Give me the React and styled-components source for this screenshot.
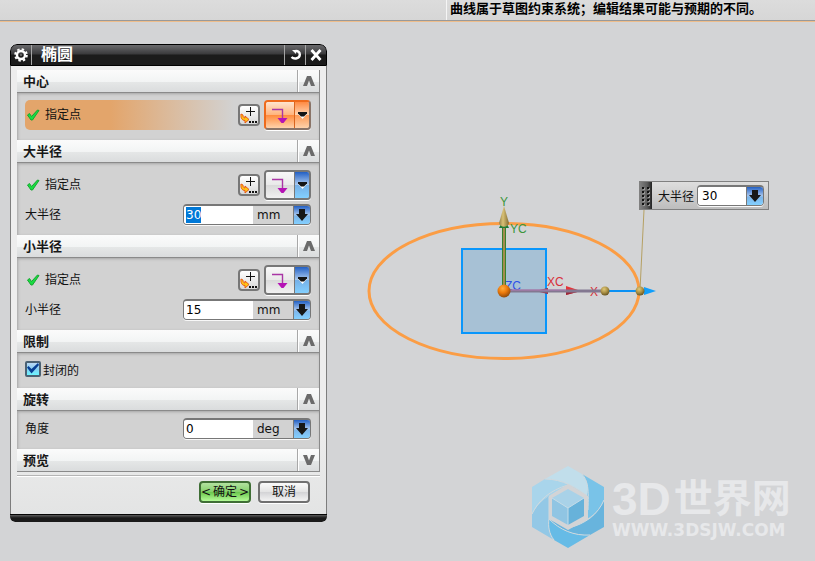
import { useEffect, useRef, useState } from "react";
import styled, { createGlobalStyle, css } from "styled-components";

const App = () => {
  const [major, setMajor] = useState("30");
  const [minor, setMinor] = useState("15");
  const [angle, setAngle] = useState("0");
  const [closed, setClosed] = useState(true);
  const majorRef = useRef();

  useEffect(() => {
    majorRef.current.focus();
    majorRef.current.select();
  }, []);

  return (
    <Page>
      <GlobalStyle />
      <StatusBar>
        <StatusText>曲线属于草图约束系统；编辑结果可能与预期的不同。</StatusText>
      </StatusBar>
      <Viewport>
        <Dialog>
          <TitleBar>
            <TitleButton type="button" aria-label="选项"><GearIcon /></TitleButton>
            <Title>椭圆</Title>
            <TitleButton type="button" aria-label="重置" $right><ResetIcon /></TitleButton>
            <TitleButton type="button" aria-label="关闭" $right><CloseIcon /></TitleButton>
          </TitleBar>
          <Body>
            <Section title="中心">
              <PointRow active />
            </Section>
            <Section title="大半径">
              <PointRow />
              <ValueRow id="major" label="大半径" unit="mm" value={major} onChange={setMajor} inputRef={majorRef} />
            </Section>
            <Section title="小半径">
              <PointRow />
              <ValueRow id="minor" label="小半径" unit="mm" value={minor} onChange={setMinor} />
            </Section>
            <Section title="限制">
              <CheckLabel>
                <CheckBox>
                  <input type="checkbox" checked={closed} onChange={(e) => setClosed(e.target.checked)} />
                  {closed && <TickIcon />}
                </CheckBox>
                封闭的
              </CheckLabel>
            </Section>
            <Section title="旋转">
              <ValueRow id="angle" label="角度" unit="deg" value={angle} onChange={setAngle} />
            </Section>
            <Section title="预览" collapsed />
            <Actions>
              <ActionButton type="button" $primary>
                <span>&lt;</span>
                <span>确定</span>
                <span>&gt;</span>
              </ActionButton>
              <ActionButton type="button">取消</ActionButton>
            </Actions>
          </Body>
          <BottomEdge />
        </Dialog>
        <Sketch />
        <FloatingInput>
          <Grip><GripIcon /></Grip>
          <label htmlFor="floating">大半径</label>
          <Field $floating>
            <input id="floating" value={major} onChange={(e) => setMajor(e.target.value)} />
            <FieldArrow type="button" aria-label="大半径选项"><DownArrow /></FieldArrow>
          </Field>
        </FloatingInput>
        <Watermark>
          <LogoIcon />
          <div>
            <Brand><b>3D</b>世界网</Brand>
            <Site>WWW.3DSJW.COM</Site>
          </div>
        </Watermark>
      </Viewport>
    </Page>
  );
};

const Section = ({ title, collapsed, children }) => (
  <section>
    <SectionHeader>
      <h2>{title}</h2>
      <CollapseButton type="button" aria-label={title} aria-expanded={!collapsed}>
        <svg width="12" height="10" viewBox="0 0 12 10">
          <path d={collapsed ? "M0 0h4l2 5.500L8 0h4L8 10H4z" : "M0 10L4 0h4l4 10H8L6 4.500 4 10z"} fill="#6b6b6b" />
        </svg>
      </CollapseButton>
    </SectionHeader>
    {children && <SectionBody>{children}</SectionBody>}
  </section>
);

const PointRow = ({ active }) => (
  <Point $active={active}>
    <CheckMark />
    <span>指定点</span>
    <SmallButton type="button" aria-label="点对话框"><PointIcon /></SmallButton>
    <SplitButton $active={active}>
      <button type="button" aria-label="自动判断的点"><InferIcon /></button>
      <button type="button" aria-label="点类型">
        <svg width="9" height="7" viewBox="0 0 9 7">
          <path d="M0 2l4.500 5L9 2z" fill="#fff" />
          <path d="M0 0h9v1.500L6 4.500H3L0 1.500z" fill="#151515" />
        </svg>
      </button>
    </SplitButton>
  </Point>
);

const ValueRow = ({ id, label, unit, value, onChange, inputRef }) => (
  <Value>
    <label htmlFor={id}>{label}</label>
    <Field>
      <input id={id} ref={inputRef} value={value} onChange={(e) => onChange(e.target.value)} />
      <Unit>{unit}</Unit>
      <FieldArrow type="button" aria-label={`${label}选项`}><DownArrow /></FieldArrow>
    </Field>
  </Value>
);

/* icons */

const GearIcon = () => (
  <svg width="14" height="14" viewBox="0 0 14 14">
    <circle cx="7" cy="7" r="5.800" fill="none" stroke="#fff" strokeWidth="2" strokeDasharray="2.400 2.155" />
    <circle cx="7" cy="7" r="4" fill="none" stroke="#fff" strokeWidth="2.400" />
    <circle cx="7" cy="7" r="1" fill="#777" />
  </svg>
);

const ResetIcon = () => (
  <svg width="13" height="12" viewBox="0 0 13 12">
    <path d="M6 2.200c3-.6 4.800.8 4.800 3.300 0 4-5.500 5.200-8.300 2.500" fill="none" stroke="#fff" strokeWidth="2.400" />
    <path d="M3 1h4v4z" fill="#fff" />
  </svg>
);

const CloseIcon = () => (
  <svg width="12" height="12" viewBox="0 0 12 12">
    <path d="M1.500 1l9 10M10.500 1l-9 10" stroke="#fff" strokeWidth="2.800" />
  </svg>
);

const CheckMark = () => (
  <svg width="13" height="12" viewBox="0 0 13 12">
    <path d="M.5 6l2-1.500 2 3L10.500 1l1.500.5L5.500 11H4z" fill="#19dd42" stroke="#16a52f" strokeWidth="1" />
  </svg>
);

const TickIcon = () => (
  <svg width="12" height="12" viewBox="0 0 12 12">
    <path d="M0 4.500L1.500 3l3 3L11 0l1 2-7.500 8.500z" fill="#073f94" />
  </svg>
);

const PointIcon = () => (
  <svg width="18" height="18" viewBox="0 0 18 18">
    <path d="M6 5.500h9M10.500 1v9" stroke="#111" strokeWidth="1" />
    <path d="M1 8c-.5 4 1 6.500 4 6.500V17l4-3.500L5 10v2C3.500 12 2.800 10.500 3 9z" fill="#ffc414" stroke="#e85a18" strokeWidth="1" />
    <path d="M9 15h2v2H9zM12 15h2v2h-2zM15 15h2v2h-2z" fill="#111" />
  </svg>
);

const InferIcon = () => (
  <svg width="17" height="18" viewBox="0 0 17 18">
    <path d="M0 3.500h10.500V13" fill="none" stroke="#a936a5" strokeWidth="1.400" />
    <path d="M5.500 12h10L11.500 17h-2z" fill="#b513b5" />
  </svg>
);

const DownArrow = () => (
  <svg width="12" height="12" viewBox="0 0 12 12">
    <path d="M3 0h6v5h3L6 12 0 5h3z" fill="#171717" />
  </svg>
);

const GripIcon = () => (
  <svg width="8" height="20" viewBox="0 0 8 20">
    {[0, 4, 8, 12, 16].map((y) => (
      <g key={y}>
        <path d={`M1 ${y + 2}h2v2H1zM6 ${y + 2}h2v2H6z`} fill="#9a9a9a" />
        <path d={`M0 ${y + 1}h2v2H0zM5 ${y + 1}h2v2H5z`} fill="#111" />
      </g>
    ))}
  </svg>
);

const LogoIcon = () => (
  <svg width="72" height="82" viewBox="0 0 72 82">
    <path d="M13 13L36 0l14 8c6 7 7 15 6 23C46 22 30 13 13 13z" fill="#c1deeb" />
    <path d="M50 8l22 13v13c-4 10-10 15-17 19V30c2-8 1-15-5-22z" fill="#79c3e8" />
    <path d="M72 34v27L58 69C42 70 28 64 17 53l19 9c18-4 30-14 36-28z" fill="#68b4dd" />
    <path d="M58 69L36 82 22 74c-5-6-6-14-5-21 11 11 25 17 41 16z" fill="#66bbe6" />
    <path d="M22 74L0 61V48c4-8 10-14 17-18v23c-1 7 0 15 5 21z" fill="#93c8e6" />
    <path d="M0 48V21l13-8c17 0 33 9 43 18L36 19 17 30C10 34 4 40 0 48z" fill="#a9d5eb" />
    <path
      d="M13 13c17 0 33 9 43 18M50 8c6 7 7 15 6 36M72 34c-6 14-18 24-36 28M58 69C42 70 28 64 17 53M22 74c-5-6-6-14-5-21V31M0 48c6-13 18-24 36-29"
      fill="none"
      stroke="#d0dadf"
    />
    <path d="M36 18l20 12v23L36 64 17 53V30z" fill="#d3d4d6" />
    <path d="M36 23l16 9-16 10-16-10z" fill="#a9d2e8" />
    <path d="M20 32l16 10v17L20 50z" fill="#90c5e3" />
    <path d="M36 42l16-10v18l-16 9z" fill="#67b2da" />
    <path d="M20 32l16 10 16-10M36 42v17" fill="none" stroke="#c5dce8" />
  </svg>
);

/* the ellipse preview with the work coordinate system at its centre */
const Sketch = () => (
  <SketchCanvas width="300" height="190" viewBox="360 180 300 190">
    <defs>
      <radialGradient id="orange" cx=".4" cy=".3" r=".7">
        <stop offset="0" stopColor="#ffae3d" />
        <stop offset=".5" stopColor="#ec7a0c" />
        <stop offset="1" stopColor="#8f4a0c" />
      </radialGradient>
      <radialGradient id="brass" cx=".4" cy=".3" r=".7">
        <stop offset="0" stopColor="#e0c878" />
        <stop offset=".5" stopColor="#b0964a" />
        <stop offset="1" stopColor="#6a5722" />
      </radialGradient>
      <linearGradient id="cone">
        <stop offset="0" stopColor="#93804a" />
        <stop offset=".4" stopColor="#d9c176" />
        <stop offset="1" stopColor="#806a31" />
      </linearGradient>
    </defs>
    <rect x="462" y="249" width="84" height="84" fill="#a7c1d5" stroke="#0996fb" strokeWidth="2" />
    <ellipse cx="504" cy="291" rx="135" ry="67.500" fill="none" stroke="#fb9d45" strokeWidth="3" />
    <path d="M644 210L640 290" stroke="#b5a063" />
    <text x="500" y="206" fill="#3c963c">Y</text>
    <text x="510" y="233" fill="#3c963c">YC</text>
    <text x="505" y="290" fill="#2d50e8">ZC</text>
    <text x="547" y="286" fill="#d8303a">XC</text>
    <text x="590" y="296" fill="#d8303a">X</text>
    <path d="M504 291V224" stroke="#38802d" strokeWidth="4" />
    <path d="M504 291V224" stroke="#a38c4e" strokeWidth="2" />
    <path d="M499 228l2-4h6l2 4z" fill="#1d7d37" />
    <path d="M504 206l5 17c-1 5-9 5-10 0z" fill="url(#cone)" />
    <path d="M566 286l15 5-15 4z" fill="#e3343a" />
    <path d="M566 291h15l-15 4z" fill="#99283a" />
    <path d="M535 291l13-3v6z" fill="#9c2940" />
    <path d="M508 291H605" stroke="#837891" strokeWidth="3" />
    <path d="M508 290H566" stroke="#b37cb5" strokeWidth="1" />
    <path d="M605 291H644" stroke="#0b91f4" strokeWidth="2" />
    <path d="M644 287l12 4-12 4z" fill="#109ffc" />
    <circle cx="605" cy="291" r="4.500" fill="url(#brass)" />
    <circle cx="640" cy="291" r="4.500" fill="url(#brass)" />
    <circle cx="504" cy="291" r="6.500" fill="url(#orange)" />
  </SketchCanvas>
);

const GlobalStyle = createGlobalStyle`
  * {
    box-sizing: border-box;
  }
  body {
    margin: 0;
    background: #d3d4d6;
    color: #111;
    font: 12px "DejaVu Sans", "Noto Sans CJK SC", sans-serif;
  }
  h1, h2 {
    margin: 0;
  }
  svg {
    display: block;
    flex: none;
  }
  button, input {
    margin: 0;
    padding: 0;
    border: 0;
    color: inherit;
    font: inherit;
    outline: none;
  }
  input::selection {
    background: #0078d7;
    color: #fff;
  }
`;

const Page = styled.div`
  display: flex;
  flex-direction: column;
  min-height: 100vh;
`;

const StatusBar = styled.header`
  display: flex;
  height: 22px;
  padding-left: 446px;
  background: linear-gradient(#dcdcdc, #d6d6d6);
  border-bottom: 1px solid #eebd8b;
  box-shadow: inset 0 -1px #999;
`;

const StatusText = styled.p`
  margin: 0;
  padding-left: 3px;
  border-left: 1px solid #f5f5f5;
  height: 20px;
  color: #000;
  font-size: 13px;
  font-weight: bold;
  line-height: 18px;
  white-space: nowrap;
`;

const Viewport = styled.main`
  position: relative;
  flex: 1;
  padding: 22px 10px 40px;
`;

const Dialog = styled.div`
  width: 317px;
  border-radius: 7px 7px 5px 5px;
  overflow: hidden;
`;

const TitleBar = styled.div`
  display: flex;
  height: 22px;
  background: linear-gradient(#6a6a6d, #3a3a3c 45%, #1b1b1b 50%, #1b1b1b);
  border: 1px solid #000;
  border-radius: 7px 7px 0 0;
`;

const Title = styled.h1`
  flex: 1;
  padding-left: 9px;
  color: #fff;
  font-size: 16px;
  line-height: 19px;
`;

const TitleButton = styled.button`
  display: grid;
  place-items: center;
  width: 21px;
  background: none;
  border-right: 1px solid #a5a5a5;

  ${({ $right }) => $right && css`
    border-right: 0;
    border-left: 1px solid #a5a5a5;
  `}
`;

const Body = styled.div`
  padding: 4px 6px 0;
  background: linear-gradient(#ededed 80%, #e3e4e4);
  border: solid #7d7d7d;
  border-width: 0 1px;
`;

const BottomEdge = styled.div`
  height: 8px;
  background: linear-gradient(#050505 1px, #5c5c5c 1px, #1a1a1a 4px);
  border-radius: 0 0 5px 5px;
`;

const SectionHeader = styled.div`
  display: flex;
  height: 23px;
  background: linear-gradient(#fbfbfb, #f2f4f4 55%, #e5e7e7 55%, #dadcdd);
  border: solid #8a8a8a;
  border-width: 0 1px 1px 0;

  h2 {
    flex: 1;
    padding-left: 6px;
    color: #181818;
    font-size: 13px;
    line-height: 23px;
  }
`;

const CollapseButton = styled.button`
  display: grid;
  place-items: center;
  width: 22px;
  background: none;
  border-left: 1px solid #a8a8a8;
  box-shadow: inset 1px 0 #fff;
`;

const SectionBody = styled.div`
  display: grid;
  gap: 4px;
  padding: 7px 8px 10px;
  background: #d2d2d2;
  border-right: 1px solid #8a8a8a;
  box-shadow: inset 1px 1px 3px #a5a5a5;
`;

const Point = styled.div`
  display: flex;
  align-items: center;
  gap: 4px;
  height: 30px;
  padding-left: 2px;
  border-radius: 5px;
  background: ${({ $active }) => ($active ? "linear-gradient(90deg, #e3a56b 30%, #d2d2d2 73%)" : "none")};

  span {
    flex: 1;
    padding-left: 1px;
    line-height: 18px;
  }
`;

const SmallButton = styled.button`
  display: grid;
  place-items: center;
  width: 22px;
  height: 22px;
  background: linear-gradient(#fff, #d8d8d8);
  border: 2px solid #777;
  border-radius: 4px;
`;

const SplitButton = styled.div`
  display: flex;
  width: 47px;
  height: 30px;
  border: 2px solid #777;
  border-radius: 4px;
  box-shadow: 0 1px #fff;
  overflow: hidden;

  button {
    display: grid;
    place-items: center;
    flex: 1;
    background: linear-gradient(#f8f8f8, #e9e9e9 50%, #d9d9d9 50%, #f1f1f1);
  }
  button + button {
    flex: none;
    width: 15px;
    border-left: 1px solid #777;
    background: linear-gradient(#2360c4, #a9c8ee 48%, #75afe6 50%, #83d0ff);
  }

  ${({ $active }) => $active && css`
    border-color: #ee6a1c #8a7468 #8a7468 #ee6a1c;
    button {
      background: linear-gradient(#ffe3cd, #ffb47d 50%, #ff8a3c 50%, #ffd2aa);
    }
    button + button {
      border-color: #d9651f;
      background: linear-gradient(#ff8a42, #ffd4b1 48%, #ff9a55 50%, #ffd2aa);
    }
  `}
`;

const Value = styled.div`
  display: flex;
  align-items: center;
  justify-content: space-between;
  line-height: 16px;
`;

const Field = styled.div`
  display: flex;
  align-items: stretch;
  width: ${({ $floating }) => ($floating ? "67px" : "128px")};
  height: 21px;
  background: ${({ $floating }) => ($floating ? "#fff" : "#d2d2d2")};
  border: 1px solid #777;
  border-top-width: 2px;
  border-radius: 4px;
  box-shadow: 0 1px #f8f8f8;
  overflow: hidden;

  input {
    flex: 1;
    min-width: 0;
    padding-left: ${({ $floating }) => ($floating ? "4px" : "2px")};
    background: #fff;
    color: #000;
  }
`;

const Unit = styled.span`
  width: 40px;
  padding-left: 4px;
  line-height: 18px;
`;

const FieldArrow = styled.button`
  display: grid;
  place-items: center;
  width: 17px;
  background: linear-gradient(#2360c4, #a9c8ee 50%, #7db4e9 55%, #83d0ff);
  border-left: 1px solid #777;
`;

const CheckLabel = styled.label`
  display: flex;
  align-items: center;
  gap: 2px;
  height: 18px;
`;

const CheckBox = styled.span`
  display: grid;
  place-items: center;

  input, svg {
    grid-area: 1 / 1;
  }
  input {
    appearance: none;
    width: 16px;
    height: 16px;
    background: linear-gradient(#b9d9f5, #87cdf2 50%, #6af5ff);
    border: 2px solid #4b6173;
    border-radius: 2px;
  }
  svg {
    pointer-events: none;
  }
`;

const Actions = styled.div`
  display: flex;
  justify-content: flex-end;
  gap: 7px;
  margin-top: 3px;
  padding: 5px 10px 11px;
  border-top: 1px solid #b5b5b5;
  box-shadow: inset 0 1px #fff;
`;

const ActionButton = styled.button`
  display: flex;
  align-items: center;
  justify-content: center;
  gap: 2px;
  width: 52px;
  height: 22px;
  line-height: 16px;
  white-space: nowrap;
  background: linear-gradient(#fafafa, #e3e3e3 50%, #d3d3d5 50%, #f3f3f3);
  border: 2px solid #707070;
  border-radius: 4px;
  box-shadow: 0 1px #fff;

  ${({ $primary }) => $primary && css`
    background: linear-gradient(#b2e2a0, #83cf69 50%, #69c64b 50%, #b5fb98);
    border-color: #3f6e35;
  `}
`;

const SketchCanvas = styled.svg`
  position: absolute;
  left: 360px;
  top: 158px;
  font: 12px "Liberation Sans", sans-serif;
`;

const FloatingInput = styled.div`
  position: absolute;
  left: 639px;
  top: 159px;
  display: flex;
  align-items: center;
  width: 130px;
  height: 29px;
  background: linear-gradient(#dedede, #bdbdbd);
  border: 1px solid #808080;

  label {
    flex: 1;
    padding-left: 6px;
  }
  ${Field} {
    margin-right: 4px;
  }
`;

const Grip = styled.div`
  display: grid;
  place-items: center;
  align-self: stretch;
  width: 12px;
  background: linear-gradient(90deg, #808080, #5c5c5c 60%, #222);
`;

const Watermark = styled.div`
  position: absolute;
  left: 532px;
  top: 444px;
  display: flex;
  gap: 8px;
  color: #e7e8ea;
  white-space: nowrap;
`;

const Brand = styled.div`
  display: flex;
  align-items: center;
  gap: 3px;
  height: 54px;
  padding-top: 12px;
  font: bold 39px/44px "Liberation Sans", "Noto Sans CJK SC", sans-serif;

  b {
    font-size: 46px;
  }
`;

const Site = styled.div`
  font-size: 17px;
  font-weight: bold;
  line-height: 20px;
`;

export default App;
